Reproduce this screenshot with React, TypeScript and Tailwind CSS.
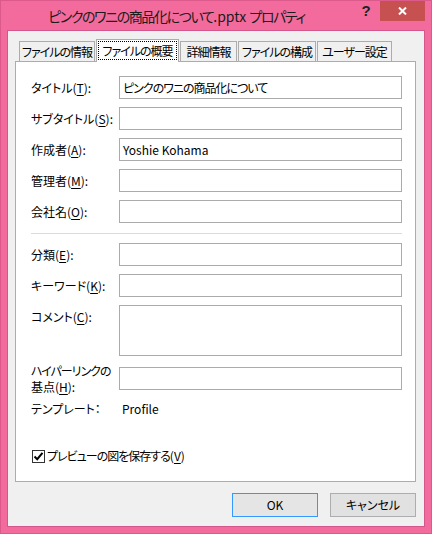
import type { FC, ReactNode } from 'react';

const Mn: FC<{ children: ReactNode }> = ({ children }) => (
  <span className="underline underline-offset-2 decoration-1">{children}</span>
);

const Field: FC<{ label: ReactNode; value?: ReactNode; tall?: boolean }> = ({ label, value, tall }) => (
  <div className={`flex ${tall ? 'items-start h-[51px]' : 'items-center h-[23px]'}`}>
    <div className={`w-[88px] shrink-0 leading-[16px] whitespace-nowrap ${tall ? 'pt-[4px]' : ''}`}>{label}</div>
    <div
      className={`w-[283px] shrink-0 ${tall ? 'h-[51px]' : 'h-[23px]'} border border-[#ababab] bg-white px-[3px] flex items-center leading-[16px] whitespace-nowrap`}
    >
      {value}
    </div>
  </div>
);

const Tab: FC<{ w: string; label: string; active?: boolean; first?: boolean }> = ({ w, label, active, first }) =>
  active ? (
    <div className={`${w} ${first ? '' : 'ml-[1px]'} h-[23px] -mb-px relative z-10 bg-white border border-b-0 border-[#acacac] flex justify-center`}>
      <span className="mt-[1px] h-[19px] w-[calc(100%-2px)] border border-dotted border-black flex items-center justify-center leading-[16px] whitespace-nowrap tracking-[-1px]">
        {label}
      </span>
    </div>
  ) : (
    <div className={`${w} ${first ? '' : 'ml-[1px]'} h-[20px] bg-[#f0f0f0] border border-b-0 border-[#acacac] flex items-center justify-center leading-[16px] whitespace-nowrap tracking-[-1px]`}>
      {label}
    </div>
  );

export default function App() {
  return (
    <div className="w-[432px] h-[534px] bg-[#f36b9c] border border-[#dc5a8b] flex flex-col text-[12px] text-black font-['Noto_Sans_CJK_JP',sans-serif] [font-feature-settings:'palt']">
      {/* title bar */}
      <div className="h-[29px] flex items-start">
        <div className="flex-1 h-[29px] flex items-center justify-center text-[14px] text-[#1b1b1b] leading-[18px] pt-[1px] whitespace-nowrap">
          <span className="tracking-[-1.4px]">ピンクのワニの商品化について</span>
          <span>.pptx&nbsp;</span>
          <span className="tracking-[-1.4px]">プロパティ</span>
        </div>
        <div className="w-[28px] h-[20px] flex items-center justify-center text-[15px] font-bold text-[#222] leading-[16px] font-['Liberation_Sans',sans-serif]">
          ?
        </div>
        <div className="w-[45px] h-[20px] bg-[#c75050] flex items-center justify-center mr-[6px]">
          <svg width="9" height="8" viewBox="0 0 9 8">
            <path d="M1 0.5 L8 7.5 M8 0.5 L1 7.5" stroke="white" strokeWidth="2" />
          </svg>
        </div>
      </div>

      {/* client */}
      <div className="flex-1 mx-[6px] mb-[6px] border border-[#d3578a] bg-[#f0f0f0] flex flex-col pt-[8px] px-[7px]">
        <div className="h-[22px] flex items-end pl-[4px]">
          <Tab w="w-[76px]" label="ファイルの情報" first />
          <Tab w="w-[83px]" label="ファイルの概要" active />
          <Tab w="w-[57px]" label="詳細情報" />
          <Tab w="w-[78px]" label="ファイルの構成" />
          <Tab w="w-[75px]" label="ユーザー設定" />
        </div>

        <div className="w-[401px] h-[421px] bg-white border border-[#acacac] pt-[14px] pl-[15px] flex flex-col">
          <div className="flex flex-col gap-[8px]">
            <Field
              label={<>タイトル(<Mn>T</Mn>):</>}
              value={<span className="tracking-[-1px]">ピンクのワニの商品化について</span>}
            />
            <Field label={<>サブタイトル(<Mn>S</Mn>):</>} />
            <Field label={<>作成者(<Mn>A</Mn>):</>} value="Yoshie Kohama" />
            <Field label={<>管理者(<Mn>M</Mn>):</>} />
            <Field label={<>会社名(<Mn>O</Mn>):</>} />
          </div>

          <div className="w-[371px] h-px bg-[#dcdcdc] mt-[10px] mb-[9px]" />

          <div className="flex flex-col gap-[8px]">
            <Field label={<>分類(<Mn>E</Mn>):</>} />
            <Field label={<>キーワード(<Mn>K</Mn>):</>} />
            <Field label={<>コメント(<Mn>C</Mn>):</>} tall />
          </div>

          <div className="mt-[11px]">
            <Field
              label={
                <>
                  <span className="tracking-[-1px]">ハイパーリンクの</span>
                  <br />
                  基点(<Mn>H</Mn>):
                </>
              }
            />
          </div>

          <div className="mt-[11px] h-[16px] flex items-center leading-[16px]">
            <div className="w-[88px]">テンプレート：</div>
            <div className="pl-[3px]">Profile</div>
          </div>

          <div className="mt-[31px] h-[16px] flex items-center leading-[16px] pl-[1px]">
            <div className="w-[13px] h-[13px] border border-[#333] bg-white flex items-center justify-center">
              <svg width="11" height="11" viewBox="0 0 11 11">
                <path d="M1.5 5.5 L4.2 8.2 L9.5 1.8" stroke="black" strokeWidth="2" fill="none" />
              </svg>
            </div>
            <span className="ml-[2px]">
              <span className="tracking-[-1px]">プレビューの図を保存する</span>(<Mn>V</Mn>)
            </span>
          </div>
        </div>

        <div className="flex justify-end gap-[12px] pr-[1px] mt-[11px]">
          <button className="w-[86px] h-[24px] bg-[#e5e5e5] border border-[#3399ff] flex items-center justify-center leading-[16px]">
            OK
          </button>
          <button className="w-[86px] h-[24px] bg-[#e1e1e1] border border-[#adadad] flex items-center justify-center leading-[16px]">
            キャンセル
          </button>
        </div>
      </div>
    </div>
  );
}
